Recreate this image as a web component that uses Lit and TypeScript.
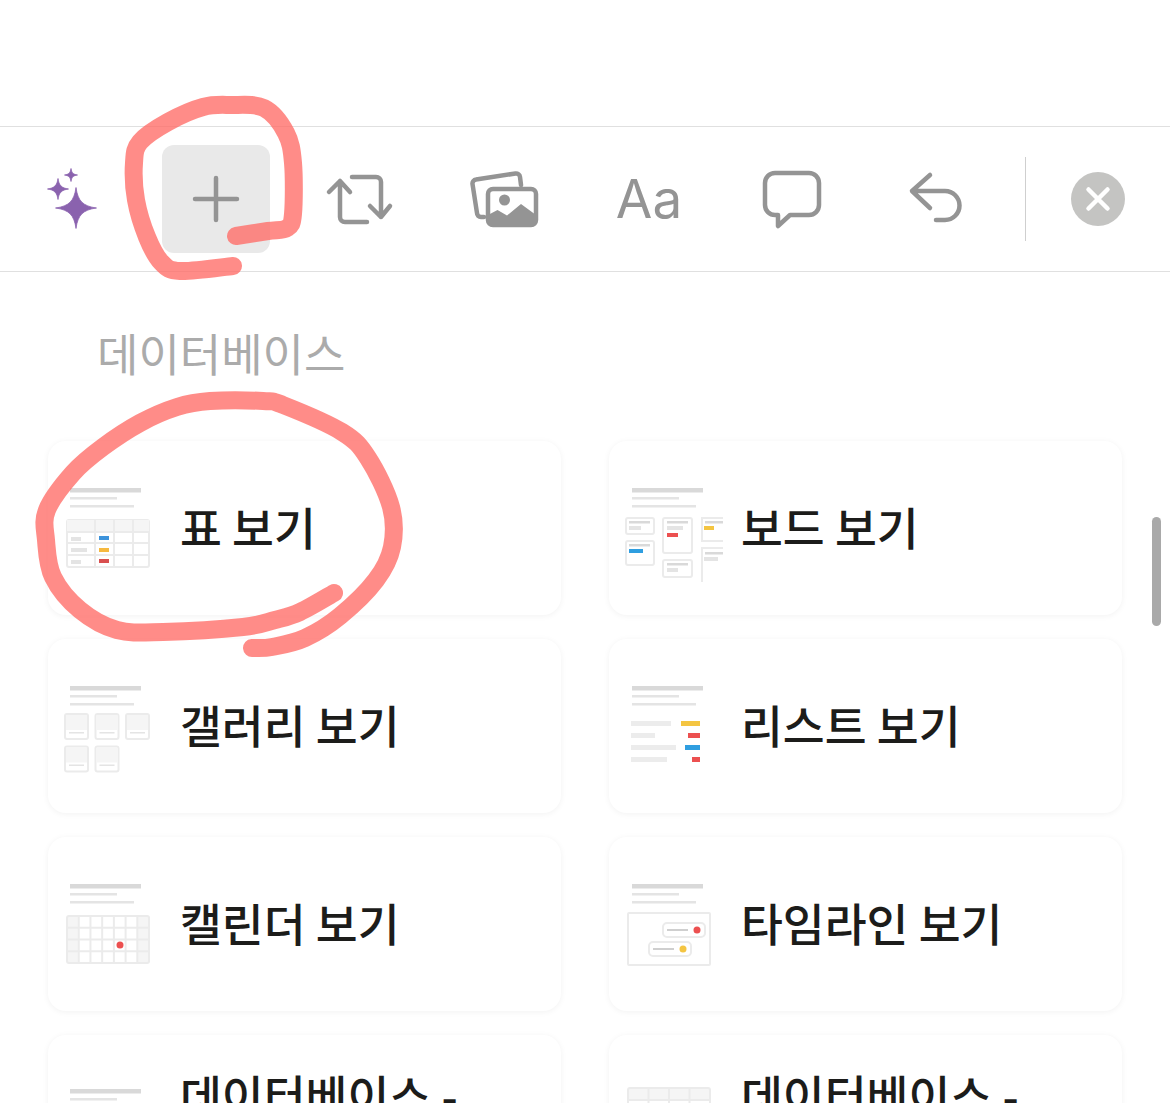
import { LitElement, html, svg, css } from "lit";
import { customElement } from "lit/decorators.js";

type Pt = [number, number];

// Catmull-Rom through the sampled points of a hand-drawn stroke.
function smooth(p: Pt[]): string {
  let d = `M${p[0][0]} ${p[0][1]}`;
  for (let i = 0; i < p.length - 1; i++) {
    const a = p[Math.max(i - 1, 0)], b = p[i], c = p[i + 1], e = p[Math.min(i + 2, p.length - 1)];
    const c1 = [b[0] + (c[0] - a[0]) / 6, b[1] + (c[1] - a[1]) / 6];
    const c2 = [c[0] - (e[0] - b[0]) / 6, c[1] - (e[1] - b[1]) / 6];
    d += ` C${c1[0].toFixed(1)} ${c1[1].toFixed(1)} ${c2[0].toFixed(1)} ${c2[1].toFixed(1)} ${c[0]} ${c[1]}`;
  }
  return d;
}

const MARK_A: Pt[] = [[236, 236], [268, 231], [287, 228], [293, 214], [293, 163], [286, 133], [264, 108], [230, 105], [203, 107], [168, 122], [140, 142], [134, 163], [136, 200], [147, 237], [161, 262], [180, 271], [233, 266]];
const MARK_B: Pt[] = [[334, 593], [300, 612], [275, 620], [243, 627], [163, 632], [117, 630], [80, 610], [53, 577], [46, 540], [47, 510], [73, 473], [103, 447], [140, 423], [177, 407], [210, 401], [263, 401], [283, 405], [342, 432], [368, 458], [391, 507], [392, 547], [376, 580], [340, 616], [305, 638], [272, 647], [252, 648]];

const LINE = "#ebebeb", TINT = "#f5f5f5", MID = "#e4e4e4", DARK = "#d9d9d9";
const RED = "#ec5050", BLUE = "#2f9ee0", YEL = "#f4c542";

const bar = (x: number, y: number, w: number, h: number, f: string) => svg`<rect x=${x} y=${y} width=${w} height=${h} fill=${f}></rect>`;
const box = (x: number, y: number, w: number, h: number, f = "#fff", rx = 2) => svg`<rect x=${x} y=${y} width=${w} height=${h} rx=${rx} fill=${f} stroke=${LINE} stroke-width="2"></rect>`;
const titles = (x = 8, dy = 0) => svg`${bar(x, 16 + dy, 71, 4.5, DARK)}${bar(x, 25 + dy, 47, 2.5, MID)}${bar(x, 33 + dy, 64, 2.5, MID)}`;

const tableThumb = () => svg`${titles()}
  ${box(5, 48, 82, 47)}${bar(5, 48, 82, 12, TINT)}
  ${[33, 52, 71].map((x) => bar(x - 1, 48, 2, 47, LINE))}
  ${[60, 71, 83].map((y) => bar(5, y - 1, 82, 2, LINE))}
  ${bar(9, 65, 10, 4, MID)}${bar(9, 76, 16, 4, MID)}${bar(9, 88, 10, 4, MID)}
  ${bar(37, 64, 10, 4, "#3d93db")}${bar(37, 76, 10, 4, "#f6b93f")}${bar(37, 87, 10, 4, "#d94f4f")}`;

const boardThumb = () => svg`${titles(9)}
  ${box(3, 46, 28, 16)}${bar(6, 49, 21, 2.5, DARK)}${bar(6, 54, 12, 4, MID)}
  ${box(3, 69, 28, 24)}${bar(6, 72, 21, 2.5, DARK)}${bar(6, 77, 14, 4, BLUE)}
  ${box(40, 46, 29, 35)}${bar(44, 49, 21, 2.5, DARK)}${bar(44, 54, 16, 4, MID)}${bar(44, 61, 11, 4, RED)}
  ${box(40, 88, 29, 17)}${bar(44, 91, 21, 2.5, DARK)}${bar(44, 96, 11, 4, MID)}
  <path d="M100 46 H79 V69 H100" fill="none" stroke=${LINE} stroke-width="2"></path>
  ${bar(82, 49, 18, 2.5, DARK)}${bar(81, 54, 10, 4, YEL)}
  <path d="M100 76 H79 V110" fill="none" stroke=${LINE} stroke-width="2"></path>
  ${bar(82, 80, 18, 2.5, DARK)}${bar(81, 85, 14, 4, MID)}`;

const tile = (x: number, y: number) => svg`${box(x, y, 23, 25)}<rect x=${x + 1} y=${y + 1} width="21" height="15" fill=${TINT}></rect>${bar(x + 4, y + 18, 15, 1.5, MID)}`;
const galleryThumb = () => svg`${titles()}${tile(3, 44)}${tile(33.5, 44)}${tile(64, 44)}${tile(3, 76.5)}${tile(33.5, 76.5)}`;

const listThumb = () => svg`${titles(9)}
  ${bar(8, 51, 40, 5, "#ececec")}${bar(58, 51, 19, 5, YEL)}
  ${bar(8, 63, 24, 5, "#ececec")}${bar(65, 63, 12, 5, RED)}
  ${bar(8, 75, 45, 5, "#ececec")}${bar(62, 75, 15, 5, BLUE)}
  ${bar(8, 87, 36, 5, "#ececec")}${bar(69, 87, 8, 5, RED)}`;

const grid = (x: number, y: number, cols: number, rows: number, cw: number, rh: number) => svg`
  ${box(x, y, cols * cw, rows * rh, "none")}
  ${Array.from({ length: cols - 1 }, (_, i) => bar(x + (i + 1) * cw - 1, y, 2, rows * rh, LINE))}
  ${Array.from({ length: rows - 1 }, (_, i) => bar(x, y + (i + 1) * rh - 1, cols * cw, 2, LINE))}`;

const calendarThumb = () => svg`${titles()}
  ${bar(5, 48, 12, 47, TINT)}${bar(76, 48, 11, 47, TINT)}
  ${grid(5, 48, 7, 4, 11.72, 11.75)}
  <circle cx="58" cy="77" r="3.5" fill=${RED}></circle>`;

const timelineThumb = () => svg`${titles(9)}
  ${box(5, 45, 82, 52, "#fff", 1)}
  ${box(40, 55, 42, 14, "#fff", 4)}${bar(44, 61, 21, 2, "#cfcfcf")}<circle cx="74" cy="62" r="3.5" fill=${RED}></circle>
  ${box(26, 74, 42, 14, "#fff", 4)}${bar(30, 80, 21, 2, "#cfcfcf")}<circle cx="60" cy="81" r="3.5" fill=${YEL}></circle>`;

const inlineThumb = () => svg`${titles(8, 7)}`;
const fullThumb = () => svg`${bar(5, 22, 82, 12, TINT)}${grid(5, 22, 4, 4, 20.5, 12)}`;

const CARDS: { label: string; top?: boolean; thumb: () => unknown }[] = [
  { label: "표 보기", thumb: tableThumb },
  { label: "보드 보기", thumb: boardThumb },
  { label: "갤러리 보기", thumb: galleryThumb },
  { label: "리스트 보기", thumb: listThumb },
  { label: "캘린더 보기", thumb: calendarThumb },
  { label: "타임라인 보기", thumb: timelineThumb },
  { label: "데이터베이스 -", top: true, thumb: inlineThumb },
  { label: "데이터베이스 -", top: true, thumb: fullThumb },
];

const star = (cx: number, cy: number, r: number) => {
  const a = r * 0.09, b = r * 0.34;
  return svg`<path transform="translate(${cx} ${cy})" d="M0 ${-r} C${a} ${-b} ${b} ${-a} ${r} 0 C${b} ${a} ${a} ${b} 0 ${r} C${-a} ${b} ${-b} ${a} ${-r} 0 C${-b} ${-a} ${-a} ${-b} 0 ${-r}Z" fill="#8a62ae" stroke="#8a62ae" stroke-width="0.8" stroke-linejoin="round"></path>`;
};

@customElement("app-root")
export class AppRoot extends LitElement {
  static styles = css`
    :host {
      display: block;
      width: 1170px;
      height: 1103px;
      overflow: hidden;
      position: relative;
      background: #fff;
      font-family: "Noto Sans CJK KR", "Noto Sans", sans-serif;
    }
    .toolbar {
      margin-top: 126px;
      height: 144px;
      display: flex;
      align-items: center;
      border-top: 1px solid #e0e0e0;
      border-bottom: 1px solid #e0e0e0;
    }
    .slot {
      width: 144px;
      height: 108px;
      flex: none;
      display: flex;
      align-items: center;
      justify-content: center;
    }
    .slot svg { width: 72px; height: 72px; display: block; }
    .active { width: 108px; margin: 0 18px; background: #e9e9e9; border-radius: 12px; }
    .icon { fill: none; stroke: #949494; stroke-width: 4.5; stroke-linecap: round; stroke-linejoin: round; }
    .aa {
      font-family: Inter, "Liberation Sans", sans-serif;
      font-size: 53px;
      font-weight: 400;
      color: #949494;
      line-height: 1;
      padding-left: 2px;
    }
    .divider { width: 1px; height: 84px; margin-left: 17px; background: #cfcfcf; flex: none; }
    .close { width: 54px; height: 54px; margin-left: 45px; flex: none; display: block; }
    h2 {
      margin: 0;
      padding: 51px 0 0 97px;
      height: 60px;
      line-height: 60px;
      font-size: 45px;
      font-weight: 400;
      color: #ababab;
    }
    .cards {
      margin: 58px 48px 0;
      display: grid;
      grid-template-columns: repeat(2, 513px);
      column-gap: 48px;
      row-gap: 24px;
    }
    .card {
      height: 174px;
      box-sizing: border-box;
      padding-left: 14px;
      display: flex;
      align-items: center;
      gap: 14px;
      background: #fff;
      border-radius: 18px;
      box-shadow: 0 1px 6px rgba(0, 0, 0, 0.055);
    }
    .thumb { width: 104px; height: 112px; flex: none; display: block; }
    .label {
      font-size: 45.5px;
      line-height: 52px;
      font-weight: 500;
      color: #1c1c1a;
      padding-bottom: 5px;
    }
    .top { align-self: flex-start; margin-top: 33px; white-space: nowrap; }
    .scroll {
      position: absolute;
      left: 1152px;
      top: 517px;
      width: 9px;
      height: 109px;
      border-radius: 5px;
      background: #a9a9a9;
    }
    .marks { position: absolute; inset: 0; width: 1170px; height: 1103px; pointer-events: none; }
    .marks path { fill: none; stroke: #ff6b66; stroke-opacity: 0.78; stroke-width: 18; stroke-linecap: round; stroke-linejoin: round; }
  `;

  render() {
    return html`
      <div class="toolbar">
        <div class="slot"><svg viewBox="0 0 72 72">${star(40, 45, 20.5)}${star(22, 26, 10.5)}${star(35, 12, 6.5)}</svg></div>
        <div class="slot active"><svg viewBox="0 0 72 72"><path class="icon" d="M15 36 H57 M36 15 V57"></path></svg></div>
        <div class="slot"><svg viewBox="0 0 72 72"><path class="icon" d="M5 29 L16 18 L26 29 M16 18 V54 a5 5 0 0 0 5 5 H43 M28 14 H52 a5 5 0 0 1 5 5 V54 M46 43 L57 54 L66 43"></path></svg></div>
        <div class="slot"><svg viewBox="0 0 72 72">
          <path class="icon" d="M53 22 L52 14 a4 4 0 0 0 -4.500 -3.500 L8 16.500 a4 4 0 0 0 -3.500 4.500 L9 50 a4 4 0 0 0 4 4 H16"></path>
          <rect class="icon" x="20" y="26" width="48" height="36" rx="5"></rect>
          <path d="M20 52 L29.500 47 L39 52.500 L53 41 L68 52 V59 a5 5 0 0 1 -5 5 H25 a5 5 0 0 1 -5 -5 Z" fill="#949494"></path>
          <circle cx="36.500" cy="37" r="5.500" fill="#949494"></circle>
        </svg></div>
        <div class="slot"><span class="aa">Aa</span></div>
        <div class="slot"><svg viewBox="0 0 72 72"><path class="icon" d="M19 10 H53 a10 10 0 0 1 10 10 V42 a10 10 0 0 1 -10 10 H34 L22 63 V52 H19 a10 10 0 0 1 -10 -10 V20 a10 10 0 0 1 10 -10 Z"></path></svg></div>
        <div class="slot"><svg viewBox="0 0 72 72"><path class="icon" d="M30 12 L12 28 L30 45 M12 28 H45 a14.500 14.500 0 0 1 0 29 H36"></path></svg></div>
        <div class="divider"></div>
        <svg class="close" viewBox="0 0 54 54">
          <circle cx="27" cy="27" r="27" fill="#c4c4c2"></circle>
          <path d="M17.500 17.500 L36.500 36.500 M36.500 17.500 L17.500 36.500" stroke="#fff" stroke-width="4.500" stroke-linecap="round"></path>
        </svg>
      </div>
      <h2>데이터베이스</h2>
      <div class="cards">
        ${CARDS.map(
          (c) => html`<div class="card">
            <svg class="thumb" viewBox="0 0 104 112">${c.thumb()}</svg>
            <div class=${c.top ? "label top" : "label"}>${c.label}</div>
          </div>`
        )}
      </div>
      <div class="scroll"></div>
      <svg class="marks" viewBox="0 0 1170 1103">
        <path d=${smooth(MARK_A)}></path>
        <path d=${smooth(MARK_B)}></path>
      </svg>
    `;
  }
}
